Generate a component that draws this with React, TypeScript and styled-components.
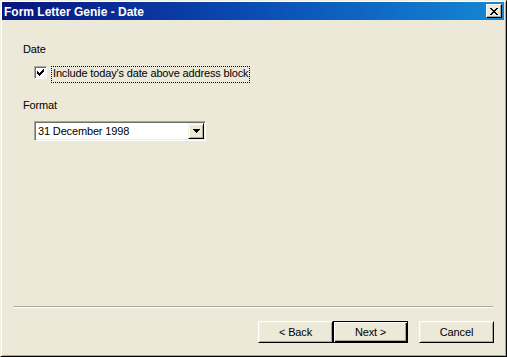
import React from 'react';
import styled, { createGlobalStyle } from 'styled-components';

const Global = createGlobalStyle`
  html, body { margin: 0; padding: 0; background: #ECE9D8; }
  body { font-family: "Liberation Sans", Arial, sans-serif; font-size: 11px; color: #000; letter-spacing: -0.15px; }
  * { box-sizing: border-box; }
`;

const Window = styled.div`
  width: 507px;
  height: 357px;
  display: flex;
  flex-direction: column;
  background: #ECE9D8;
  border: 1px solid;
  border-color: #F1EFE2 #000 #000 #F1EFE2;
  box-shadow: inset 1px 1px 0 #fff, inset -1px -1px 0 #ACA899;
  padding: 1px 2px 2px 1px;
`;

const TitleBar = styled.div`
  height: 18px;
  display: flex;
  align-items: center;
  padding: 1px 2px 0 2px;
  background: linear-gradient(to right, #08147C 0%, #0A4CB4 50%, #1488D4 100%);
`;

const Title = styled.div`
  flex: 1;
  color: #fff;
  font-weight: bold;
  font-size: 12px;
  letter-spacing: 0;
  line-height: 14px;
  white-space: nowrap;
`;

const CaptionButton = styled.div`
  width: 16px;
  height: 14px;
  margin-top: -1px;
  display: flex;
  align-items: center;
  justify-content: center;
  background: #ECE9D8;
  border: 1px solid;
  border-color: #fff #000 #000 #fff;
  box-shadow: inset -1px -1px 0 #ACA899;
`;

const Content = styled.div`
  flex: 1;
  display: flex;
  flex-direction: column;
  align-items: flex-start;
  padding: 23px 0 0 21px;
`;

const SectionLabel = styled.div<{ $top?: number }>`
  line-height: 13px;
  margin-top: ${(p) => p.$top ?? 0}px;
`;

const CheckRow = styled.div`
  display: flex;
  align-items: flex-start;
  margin: 10px 0 0 11px;
`;

const CheckBox = styled.div`
  width: 13px;
  height: 13px;
  background: #fff;
  border: 1px solid;
  border-color: #ACA899 #fff #fff #ACA899;
  box-shadow: inset 1px 1px 0 #716F64, inset -1px -1px 0 #F1EFE2;
  display: flex;
  align-items: center;
  justify-content: center;
`;

const FocusLabel = styled.div`
  margin-left: 4px;
  padding: 0 1px 2px 1px;
  line-height: 13px;
  border: 1px dotted #000;
  white-space: nowrap;
`;

const Combo = styled.div`
  margin: 9px 0 0 11px;
  width: 172px;
  height: 20px;
  display: flex;
  background: #fff;
  border: 1px solid;
  border-color: #ACA899 #fff #fff #ACA899;
  box-shadow: inset 1px 1px 0 #716F64, inset -1px -1px 0 #F1EFE2;
  padding: 2px;
`;

const ComboText = styled.div`
  flex: 1;
  padding-left: 1px;
  line-height: 15px;
  white-space: nowrap;
`;

const DropButton = styled.div`
  width: 16px;
  height: 16px;
  margin: -1px -1px 0 0;
  background: #ECE9D8;
  border: 1px solid;
  border-color: #F1EFE2 #000 #000 #F1EFE2;
  box-shadow: inset 1px 1px 0 #fff, inset -1px -1px 0 #ACA899;
  display: flex;
  align-items: center;
  justify-content: center;
`;

const Separator = styled.div`
  margin: 0 11px 0 12px;
  height: 2px;
  border-top: 1px solid #ACA899;
  border-bottom: 1px solid #fff;
`;

const ButtonRow = styled.div`
  display: flex;
  justify-content: flex-end;
  margin: 13px 10px 11px 0;
`;

const Button = styled.div<{ $default?: boolean; $gap?: number }>`
  width: 75px;
  height: 22px;
  margin-left: ${(p) => p.$gap ?? 0}px;
  display: flex;
  align-items: center;
  justify-content: center;
  background: #ECE9D8;
  border: 1px solid;
  border-color: ${(p) => (p.$default ? '#000' : '#fff #000 #000 #fff')};
  box-shadow: ${(p) =>
    p.$default
      ? 'inset 1px 1px 0 #fff, inset -1px -1px 0 #000, inset -2px -2px 0 #ACA899'
      : 'inset 1px 1px 0 #F1EFE2, inset -1px -1px 0 #ACA899'};
  line-height: 13px;
`;

const CloseGlyph = () => (
  <svg width="8" height="7" viewBox="0 0 8 7" shapeRendering="crispEdges">
    <path
      d="M0 0h2v1H0zM6 0h2v1H6zM1 1h2v1H1zM5 1h2v1H5zM2 2h4v1H2zM3 3h2v1H3zM2 4h4v1H2zM1 5h2v1H1zM5 5h2v1H5zM0 6h2v1H0zM6 6h2v1H6z"
      fill="#000"
    />
  </svg>
);

const CheckMark = () => (
  <svg width="7" height="7" viewBox="0 0 7 7" shapeRendering="crispEdges">
    <path d="M6 0h1v1H6zM5 1h2v1H5zM0 2h1v1H0zM4 2h3v1H4zM0 3h2v1H0zM3 3h3v1H3zM0 4h5v1H0zM1 5h3v1H1zM2 6h1v1H2z" fill="#000" />
  </svg>
);

const DownArrow = () => (
  <svg width="7" height="4" viewBox="0 0 7 4" shapeRendering="crispEdges">
    <path d="M0 0h7v1H0zM1 1h5v1H1zM2 2h3v1H2zM3 3h1v1H3z" fill="#000" />
  </svg>
);

export default function App() {
  return (
    <>
      <Global />
      <Window>
        <TitleBar>
          <Title>Form Letter Genie - Date</Title>
          <CaptionButton>
            <CloseGlyph />
          </CaptionButton>
        </TitleBar>
        <Content>
          <SectionLabel>Date</SectionLabel>
          <CheckRow>
            <CheckBox>
              <CheckMark />
            </CheckBox>
            <FocusLabel>Include today's date above address block</FocusLabel>
          </CheckRow>
          <SectionLabel $top={16}>Format</SectionLabel>
          <Combo>
            <ComboText>31 December 1998</ComboText>
            <DropButton>
              <DownArrow />
            </DropButton>
          </Combo>
        </Content>
        <Separator />
        <ButtonRow>
          <Button>&lt; Back</Button>
          <Button $default>Next &gt;</Button>
          <Button $gap={11}>Cancel</Button>
        </ButtonRow>
      </Window>
    </>
  );
}
